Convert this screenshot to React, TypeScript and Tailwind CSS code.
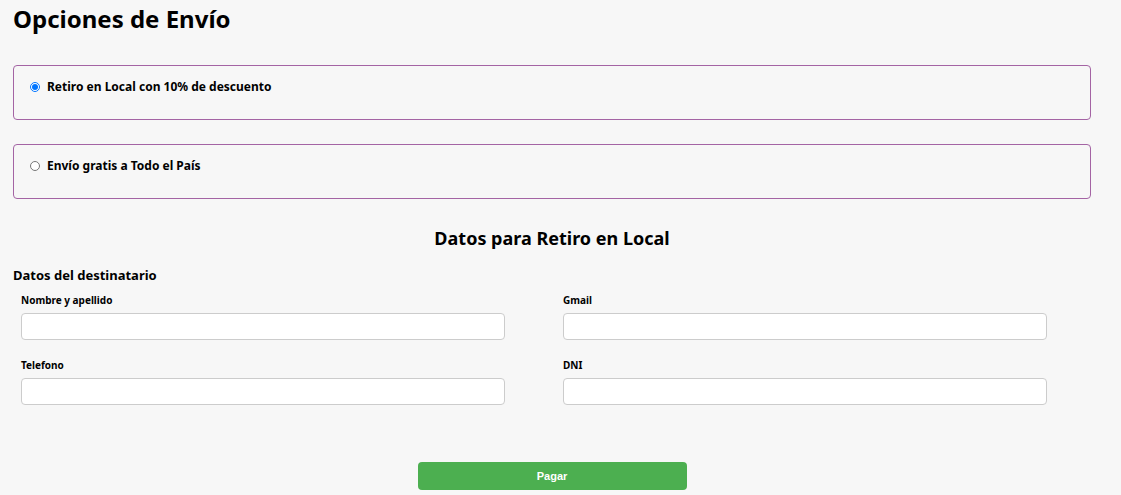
import { useState } from "react";

const fields = [
  { id: "nombre", label: "Nombre y apellido" },
  { id: "gmail", label: "Gmail" },
  { id: "telefono", label: "Telefono" },
  { id: "dni", label: "DNI" },
];

export default function App() {
  const [envio, setEnvio] = useState("local");

  return (
    <div className="min-h-[495px] bg-[#f7f7f7] pl-[13px] font-['Noto_Sans',sans-serif] text-black">
      <div className="w-[1078px]">
        <h1 className="pt-[3px] text-[24px] leading-[32px] font-bold">Opciones de Envío</h1>

        <div className="mt-[30px] flex flex-col gap-[24px]">
          {[
            { value: "local", label: "Retiro en Local con 10% de descuento" },
            { value: "envio", label: "Envío gratis a Todo el País" },
          ].map((opt) => (
            <label
              key={opt.value}
              className="flex h-[55px] items-start rounded-[4px] border border-[#a464a4] pt-[12px] pl-[16px]"
            >
              <input
                type="radio"
                name="envio"
                checked={envio === opt.value}
                onChange={() => setEnvio(opt.value)}
                className="mt-[4px] h-[10px] w-[10px] accent-[#0075ff]"
              />
              <span className="ml-[7px] text-[12px] leading-[18px] font-bold">{opt.label}</span>
            </label>
          ))}
        </div>

        <h2 className="mt-[27px] text-center text-[18px] leading-[24px] font-bold">
          Datos para Retiro en Local
        </h2>

        <h3 className="mt-[15px] text-[13px] leading-[20px] font-bold">Datos del destinatario</h3>

        <div className="mt-[8px] grid w-[1026px] grid-cols-2 gap-x-[58px] gap-y-[18px] pl-[8px] box-content">
          {fields.map((f) => (
            <div key={f.id} className="flex flex-col">
              <label htmlFor={f.id} className="text-[10px] leading-[14px] font-bold">
                {f.label}
              </label>
              <input
                id={f.id}
                type="text"
                className="mt-[6px] h-[27px] w-[484px] rounded-[4px] border border-[#cccccc] bg-white"
              />
            </div>
          ))}
        </div>

        <div className="mt-[57px] flex justify-center">
          <button className="h-[28px] w-[269px] rounded-[4px] bg-[#4caf50] font-['Liberation_Sans',sans-serif] text-[11px] font-bold text-white">
            Pagar
          </button>
        </div>
      </div>
    </div>
  );
}
